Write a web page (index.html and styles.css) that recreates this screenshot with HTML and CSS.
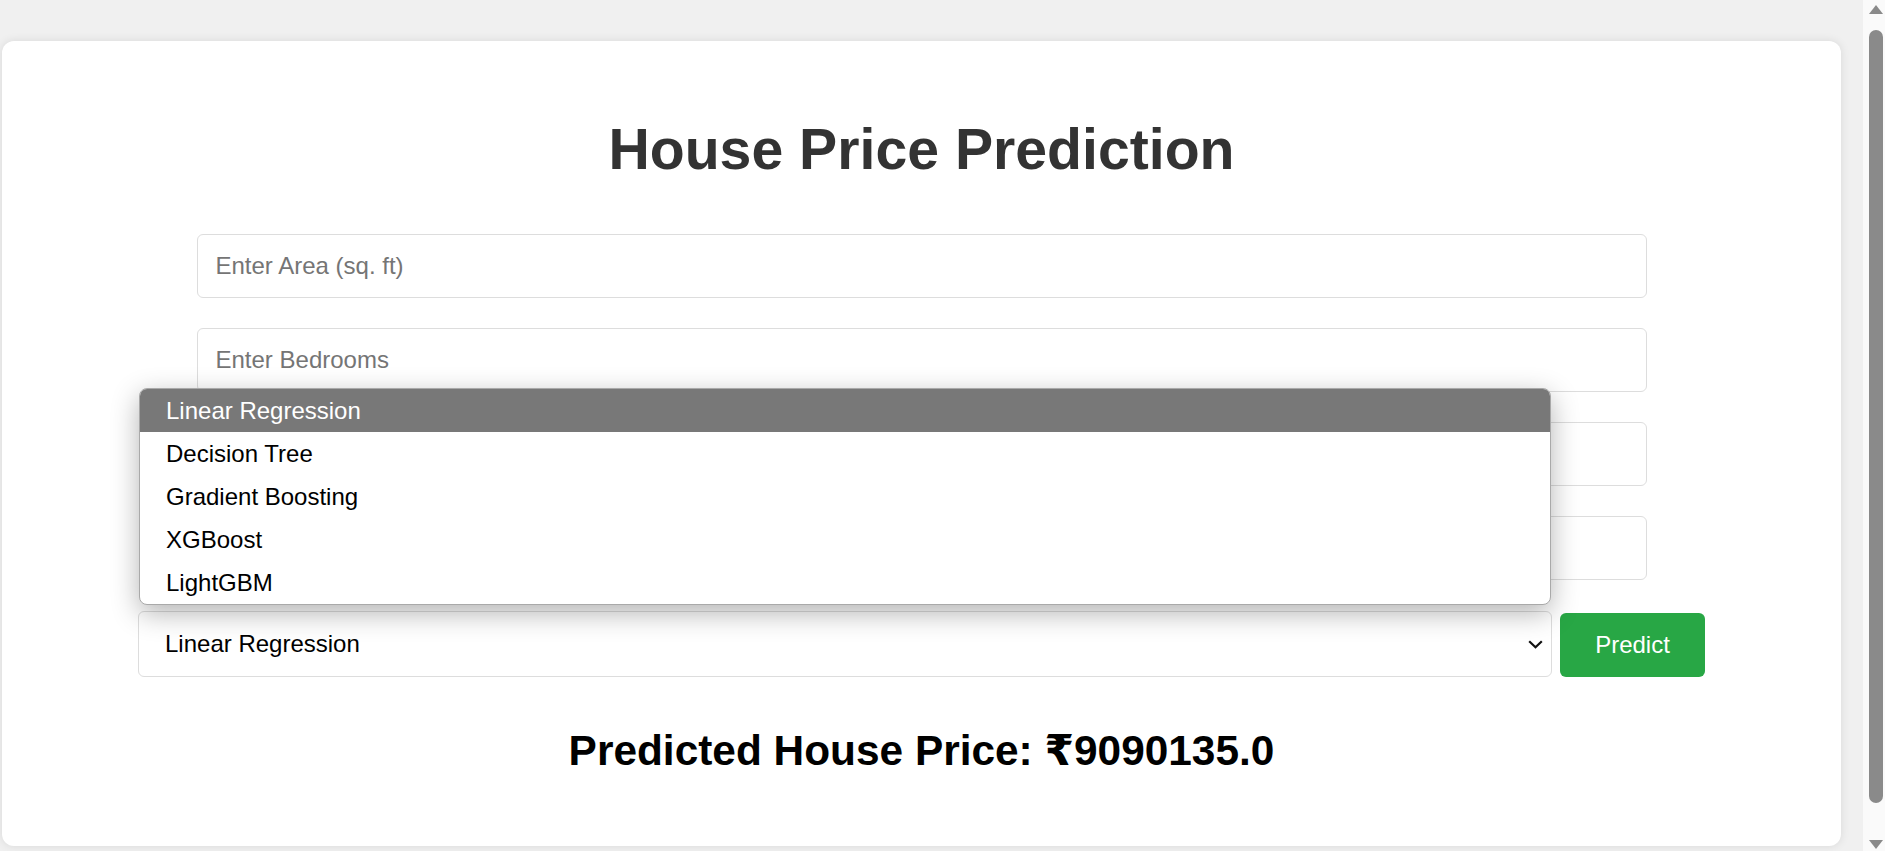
FILE: index.html
```html
<!DOCTYPE html>
<html lang="en">
<head>
<meta charset="utf-8">
<title>House Price Prediction</title>
<link rel="stylesheet" href="styles.css">
</head>
<body>
<div class="card">
  <h1 class="title">House Price Prediction</h1>
  <form class="form">
    <input class="field" type="text" placeholder="Enter Area (sq. ft)">
    <input class="field" type="text" placeholder="Enter Bedrooms">
    <input class="field" type="text" placeholder="Enter Bathrooms">
    <input class="field" type="text" placeholder="Enter Stories">
    <div class="row">
      <div class="select-wrap">
        <div class="select-box">
          <span class="select-text">Linear Regression</span>
          <svg class="chevron" width="15" height="9" viewBox="0 0 15 9"><path d="M1.2 1.2 L7.5 7.3 L13.8 1.2" fill="none" stroke="#111" stroke-width="2.2"/></svg>
        </div>
        <ul class="popup">
          <li class="option option-active">Linear Regression</li>
          <li class="option">Decision Tree</li>
          <li class="option">Gradient Boosting</li>
          <li class="option">XGBoost</li>
          <li class="option">LightGBM</li>
        </ul>
      </div>
      <button class="btn" type="button">Predict</button>
    </div>
  </form>
  <h2 class="result">Predicted House Price: ₹9090135.0</h2>
</div>
<div class="scrollbar">
  <div class="arrow-up"></div>
  <div class="thumb"></div>
  <div class="arrow-down"></div>
</div>
</body>
</html>
```
FILE: styles.css
```css
html, body {
  margin: 0;
  padding: 0;
  height: 851px;
  overflow: hidden;
}
body {
  background: #f0f0f0;
  font-family: "Liberation Sans", Arial, "DejaVu Sans", sans-serif;
  padding-top: 41px;
  box-sizing: border-box;
}
.card {
  margin-left: 2px;
  width: 1839px;
  box-sizing: border-box;
  background: #fff;
  border-radius: 12px;
  box-shadow: 0 0 10px rgba(0, 0, 0, 0.1);
  padding: 75px 0 71px;
}
.title {
  margin: 0 0 52px;
  text-align: center;
  font-size: 57.2px;
  line-height: 66px;
  font-weight: bold;
  color: #333;
}
.form {
  display: flex;
  flex-direction: column;
  align-items: center;
  gap: 30px;
  margin: 0;
}
.field {
  width: 1450px;
  height: 64px;
  box-sizing: border-box;
  border: 1px solid #ddd;
  border-radius: 6px;
  padding: 0 18px;
  font-family: "Liberation Sans", Arial, sans-serif;
  font-size: 24px;
  color: #000;
  background: #fff;
  outline: none;
}
.field::placeholder {
  color: #757575;
}
.row {
  display: flex;
  align-items: flex-end;
  gap: 8px;
  margin-top: 1px;
}
.select-wrap {
  position: relative;
  width: 1414px;
}
.select-box {
  height: 66px;
  box-sizing: border-box;
  border: 1px solid #ddd;
  border-radius: 6px;
  background: #fff;
  display: flex;
  align-items: center;
  justify-content: space-between;
  padding: 0 8px 0 26px;
  font-size: 24px;
  color: #000;
}
.chevron {
  display: block;
}
.popup {
  position: absolute;
  left: 1px;
  right: 1px;
  bottom: calc(100% + 6px);
  margin: 0;
  padding: 0;
  list-style: none;
  background: #fff;
  border: 1px solid #a9a9a9;
  border-radius: 8px;
  overflow: hidden;
  box-shadow: 0 8px 28px rgba(0, 0, 0, 0.3);
}
.option {
  height: 43px;
  line-height: 43px;
  padding-left: 26px;
  font-size: 24px;
  color: #000;
}
.option-active {
  background: #787878;
  color: #fff;
}
.btn {
  width: 145px;
  height: 64px;
  border: none;
  border-radius: 6px;
  background: #28a745;
  color: #fff;
  font-family: "Liberation Sans", Arial, sans-serif;
  font-size: 24px;
  padding: 0;
}
.result {
  margin: 50px 0 0;
  text-align: center;
  font-size: 42.4px;
  line-height: 48px;
  font-weight: bold;
  color: #000;
}
.scrollbar {
  position: fixed;
  top: 0;
  right: 0;
  width: 22px;
  height: 851px;
  background: #fafafa;
}
.arrow-up {
  position: absolute;
  left: 6px;
  top: 5px;
  width: 0;
  height: 0;
  border-left: 7px solid transparent;
  border-right: 7px solid transparent;
  border-bottom: 9px solid #8a8a8a;
}
.thumb {
  position: absolute;
  left: 6px;
  top: 30px;
  width: 14px;
  height: 773px;
  border-radius: 7px;
  background: #8a8a8a;
}
.arrow-down {
  position: absolute;
  left: 6px;
  top: 840px;
  width: 0;
  height: 0;
  border-left: 7px solid transparent;
  border-right: 7px solid transparent;
  border-top: 9px solid #8a8a8a;
}
```
